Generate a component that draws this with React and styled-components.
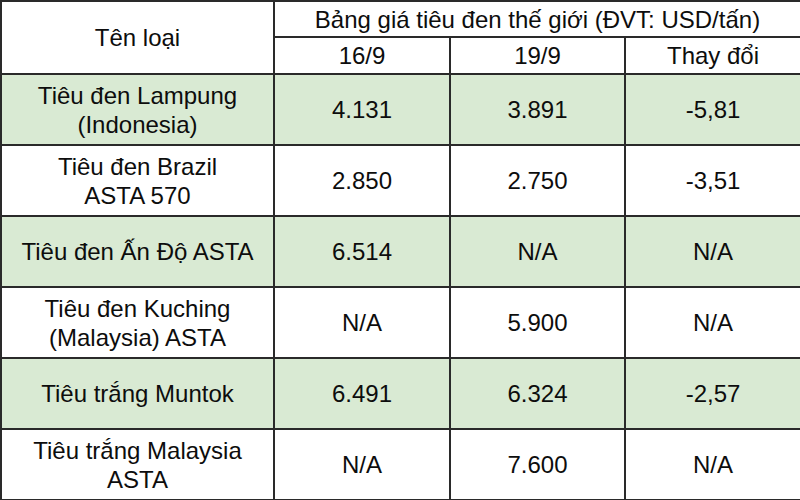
import styled, { createGlobalStyle } from "styled-components";

const GlobalStyle = createGlobalStyle`
  html, body {
    margin: 0;
    padding: 0;
    background: #ffffff;
  }
`;

const Table = styled.table`
  width: 800px;
  height: 500px;
  border-collapse: collapse;
  table-layout: fixed;
  font-family: "Liberation Sans", Arial, sans-serif;
  font-size: 24px;
  color: #0d0d0d;
`;

const Cell = styled.td`
  border: 2px solid #2a2a2a;
  padding: 0 2px;
  text-align: center;
  vertical-align: middle;
  line-height: 29px;
  background: ${({ $green }) => ($green ? "#d9ead3" : "#ffffff")};
`;

const HeadRow = styled.tr`
  height: ${({ $h }) => $h}px;
`;

const BodyRow = styled.tr`
  height: 71px;
`;

const rows = [
  { name: ["Tiêu đen Lampung", "(Indonesia)"], a: "4.131", b: "3.891", c: "-5,81", green: true },
  { name: ["Tiêu đen Brazil", "ASTA 570"], a: "2.850", b: "2.750", c: "-3,51" },
  { name: ["Tiêu đen Ấn Độ ASTA"], a: "6.514", b: "N/A", c: "N/A", green: true },
  { name: ["Tiêu đen Kuching", "(Malaysia) ASTA"], a: "N/A", b: "5.900", c: "N/A" },
  { name: ["Tiêu trắng Muntok"], a: "6.491", b: "6.324", c: "-2,57", green: true },
  { name: ["Tiêu trắng Malaysia", "ASTA"], a: "N/A", b: "7.600", c: "N/A" },
];

export default function App() {
  return (
    <>
      <GlobalStyle />
      <Table>
        <colgroup>
          <col style={{ width: 273 }} />
          <col style={{ width: 176 }} />
          <col style={{ width: 175 }} />
          <col style={{ width: 176 }} />
        </colgroup>
        <tbody>
          <HeadRow $h={36}>
            <Cell rowSpan={2}>Tên loại</Cell>
            <Cell colSpan={3}>Bảng giá tiêu đen thế giới (ĐVT: USD/tấn)</Cell>
          </HeadRow>
          <HeadRow $h={37}>
            <Cell>16/9</Cell>
            <Cell>19/9</Cell>
            <Cell>Thay đổi</Cell>
          </HeadRow>
          {rows.map((r) => (
            <BodyRow key={r.name.join(" ")}>
              <Cell $green={r.green}>
                {r.name.map((line, i) => (
                  <div key={i}>{line}</div>
                ))}
              </Cell>
              <Cell $green={r.green}>{r.a}</Cell>
              <Cell $green={r.green}>{r.b}</Cell>
              <Cell $green={r.green}>{r.c}</Cell>
            </BodyRow>
          ))}
        </tbody>
      </Table>
    </>
  );
}
